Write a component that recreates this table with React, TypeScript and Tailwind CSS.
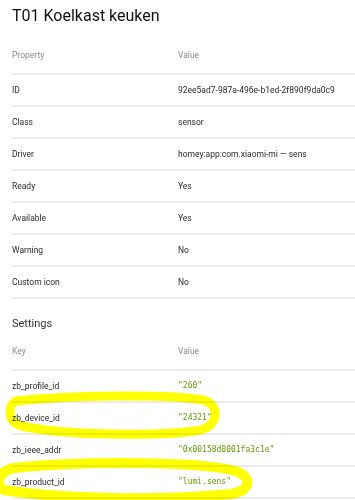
import React from 'react';

type Row = { key: string; value: string; code?: boolean };

const properties: Row[] = [
  { key: 'ID', value: '92ee5ad7-987a-496e-b1ed-2f890f9da0c9' },
  { key: 'Class', value: 'sensor' },
  { key: 'Driver', value: 'homey:app:com.xiaomi-mi — sens' },
  { key: 'Ready', value: 'Yes' },
  { key: 'Available', value: 'Yes' },
  { key: 'Warning', value: 'No' },
  { key: 'Custom icon', value: 'No' },
];

const settings: Row[] = [
  { key: 'zb_profile_id', value: '"260"', code: true },
  { key: 'zb_device_id', value: '"24321"', code: true },
  { key: 'zb_ieee_addr', value: '"0x00158d0001fa3c1e"', code: true },
  { key: 'zb_product_id', value: '"lumi.sens"', code: true },
];

function Table({ head, rows }: { head: [string, string]; rows: Row[] }) {
  return (
    <div className="ml-3">
      <div className="flex h-[38px] items-center border-b-2 border-[#ececec] text-[8.5px] text-[#8a8a8a]">
        <div className="w-[166px]">{head[0]}</div>
        <div>{head[1]}</div>
      </div>
      {rows.map((r) => (
        <div
          key={r.key}
          className="flex h-[32px] items-center border-b-2 border-[#ececec] text-[8.5px] text-[#2a2a2a]"
        >
          <div className="w-[166px]">{r.key}</div>
          {r.code ? (
            <div className="text-[8px] text-[#669900] [font-family:'DejaVu_Sans_Mono',monospace]">
              {r.value}
            </div>
          ) : (
            <div>{r.value}</div>
          )}
        </div>
      ))}
    </div>
  );
}

export default function App() {
  return (
    <div className="relative h-[500px] w-[355px] overflow-hidden bg-white [font-family:Roboto,'Liberation_Sans',sans-serif]">
      <h1 className="h-[37px] pl-3 pt-[6px] text-[16px] leading-[20px] text-[#111]">T01 Koelkast keuken</h1>
      <Table head={['Property', 'Value']} rows={properties} />
      <div className="pb-[2px] pl-3 pt-[17px] text-[11px] leading-[15px] text-[#333]">Settings</div>
      <Table head={['Key', 'Value']} rows={settings} />

      {/* marker scribbles */}
      <svg
        className="pointer-events-none absolute left-0 top-0 mix-blend-multiply"
        width="355"
        height="500"
        viewBox="0 0 355 500"
      >
        <path
          d="M16 401 C 70 395, 170 394, 203 400 C 220 404, 219 425, 201 430 C 160 437, 60 435, 22 426 C 7 422, 7 406, 16 401"
          fill="none"
          stroke="#ffff00"
          strokeWidth="9"
          strokeLinecap="round"
        />
        <path
          d="M14 468 C 80 461, 200 461, 235 471 C 252 476, 252 491, 231 494 C 160 501, 60 499, 4 490 C -6 486, -2 471, 14 468"
          fill="none"
          stroke="#ffff00"
          strokeWidth="10"
          strokeLinecap="round"
        />
      </svg>
    </div>
  );
}
